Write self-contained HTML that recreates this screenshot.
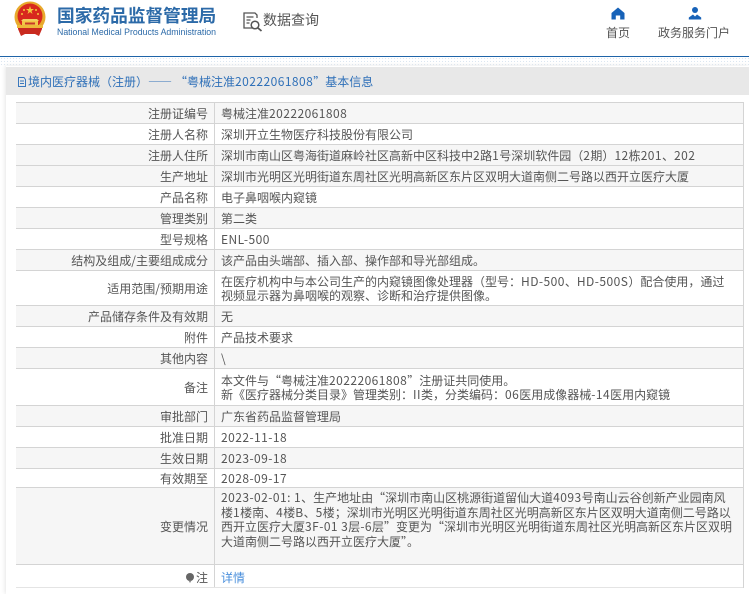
<!DOCTYPE html>
<html lang="zh"><head><meta charset="utf-8"><title>基本信息</title>
<style>
html,body{margin:0;padding:0;background:#fff}
body{width:749px;height:594px;overflow:hidden;position:relative;font-family:"Liberation Sans","Noto Sans CJK SC",sans-serif;font-size:12px;color:#555}
.a{position:absolute;white-space:nowrap}
.c{font-family:"Noto Sans CJK SC","Liberation Sans",sans-serif}
i{font-style:normal;letter-spacing:.45px}
.dots{position:absolute;left:0;top:57px;width:749px;height:9px;background-image:radial-gradient(#dbe6f0 .6px,transparent .8px);background-size:3px 3px}
.panel{position:absolute;left:6px;top:66px;width:743px;height:528px;background:#fff;box-shadow:-1px 0 4px #e6e6e6}
.head{position:absolute;left:6px;top:67px;width:743px;height:28px;background:#e8e8e8}
.row{position:absolute;left:16px;width:727px;border-top:1px solid #d4d4d4;box-sizing:border-box;background:#fff}
.g{background:#f6f6f6}
.l{position:absolute;left:0;width:192px;text-align:right;top:0;bottom:0;display:flex;align-items:center;justify-content:flex-end;color:#555;font-size:12px;white-space:nowrap}
.v{position:absolute;left:198px;top:0;bottom:0;width:525px;display:flex;align-items:center;color:#555;font-size:12px;line-height:14px;border-left:1px solid #d4d4d4;padding-left:6px;box-sizing:border-box;white-space:nowrap}
</style></head><body>
<svg class="a" style="left:13px;top:1px" width="34" height="36" viewBox="0 0 34 36">
<circle cx="17" cy="16" r="15.5" fill="#e8a92c"/>
<circle cx="17" cy="15" r="12.5" fill="#d8281e"/>
<polygon points="17,5 18,8 21,8 18.5,10 19.5,13 17,11 14.5,13 15.5,10 13,8 16,8" fill="#f4c93c"/>
<circle cx="11" cy="9" r="1" fill="#f4c93c"/><circle cx="23" cy="9" r="1" fill="#f4c93c"/><circle cx="9" cy="13" r="1" fill="#f4c93c"/><circle cx="25" cy="13" r="1" fill="#f4c93c"/>
<path d="M10 18h14l2 2H8z" fill="#f2d060"/><rect x="9" y="20" width="16" height="5" fill="#f2c848"/><rect x="12" y="21.5" width="10" height="2" fill="#c8392a"/>
<path d="M5 25h24v3l-3 7-4-2H12l-4 2-3-7z" fill="#c92a1f"/><rect x="4" y="24" width="26" height="3" fill="#eeb93a"/>
</svg>
<div class="a c" style="left:57px;top:3px;font-size:17.7px;line-height:24px;font-weight:700;color:#2c6aa8">国家药品监督管理局</div>
<div class="a" style="left:57px;top:26px;font-size:8.75px;line-height:12px;color:#2c6aa8">National Medical Products Administration</div>
<svg class="a" style="left:242px;top:11px" width="22" height="22" viewBox="0 0 22 22" fill="none" stroke="#555" stroke-width="1.3">
<path d="M11 17H2V2h11l2 2v3"/><path d="M4.500 6h7M4.500 9h4M4.500 12h3"/><circle cx="13" cy="14" r="3.800" stroke-width="1.500"/><path d="M16 17l3.500 3" stroke-width="1.800"/>
</svg>
<div class="a c" style="left:263px;top:10px;font-size:14px;line-height:20px;color:#555">数据查询</div>
<svg class="a" style="left:611px;top:7px" width="14" height="13" viewBox="0 0 14 13"><path d="M7 .5L13.500 6V12.500H9.200V8.500H4.800V12.500H.5V6z" fill="#1762b8"/></svg>
<div class="a c" style="left:606px;top:24px;font-size:12px;line-height:18px;color:#555">首页</div>
<svg class="a" style="left:688px;top:6px" width="14" height="14" viewBox="0 0 14 14"><circle cx="7" cy="4" r="3" fill="#1762b8"/><path d="M.8 13.500V11.500L5 8.500L7 10.500L9 8.500L13.200 11.500V13.500z" fill="#1762b8"/></svg>
<div class="a c" style="left:658px;top:24px;font-size:12px;line-height:18px;color:#555">政务服务门户</div>
<div class="a" style="left:0;top:56px;width:749px;height:1px;background:#1f64a8"></div>
<div class="dots"></div>
<div class="panel"></div>
<div class="head"></div>
<svg class="a" style="left:17px;top:76px" width="10" height="12" viewBox="0 0 10 12" fill="none" stroke="#3a78bd"><path d="M1.500 1.500H7l1.500 2v7h-7zM3 5h4M3 7.500h4"/></svg>
<div class="a c" style="left:28px;top:73px;font-size:12px;line-height:18px;color:#2f70b8">境内医疗器械（注册）<span style="letter-spacing:3px">——</span>“粤械注准<i>20222061808</i>”基本信息</div>

<div class="row g" style="top:102px;height:22px"><div class="l c">注册证编号</div><div class="v c"><span>粤械注准<i>20222061808</i></span></div></div>
<div class="row" style="top:123px;height:22px"><div class="l c">注册人名称</div><div class="v c">深圳开立生物医疗科技股份有限公司</div></div>
<div class="row g" style="top:144px;height:22px"><div class="l c">注册人住所</div><div class="v c"><span>深圳市南山区粤海街道麻岭社区高新中区科技中<i>2</i>路<i>1</i>号深圳软件园（<i>2</i>期）<i>12</i>栋<i>201</i>、<i>202</i></span></div></div>
<div class="row g" style="top:165px;height:22px"><div class="l c">生产地址</div><div class="v c">深圳市光明区光明街道东周社区光明高新区东片区双明大道南侧二号路以西开立医疗大厦</div></div>
<div class="row" style="top:186px;height:22px"><div class="l c">产品名称</div><div class="v c">电子鼻咽喉内窥镜</div></div>
<div class="row g" style="top:207px;height:22px"><div class="l c">管理类别</div><div class="v c">第二类</div></div>
<div class="row" style="top:228px;height:22px"><div class="l c">型号规格</div><div class="v c"><i>ENL-500</i></div></div>
<div class="row g" style="top:249px;height:22px"><div class="l c">结构及组成/主要组成成分</div><div class="v c">该产品由头端部、插入部、操作部和导光部组成。</div></div>
<div class="row" style="top:270px;height:36px"><div class="l c">适用范围/预期用途</div><div class="v c"><div>在医疗机构中与本公司生产的内窥镜图像处理器（型号：<i>HD-500</i>、<i>HD-500S</i>）配合使用，通过<br>视频显示器为鼻咽喉的观察、诊断和治疗提供图像。</div></div></div>
<div class="row g" style="top:305px;height:22px"><div class="l c">产品储存条件及有效期</div><div class="v c">无</div></div>
<div class="row" style="top:326px;height:22px"><div class="l c">附件</div><div class="v c">产品技术要求</div></div>
<div class="row g" style="top:347px;height:22px"><div class="l c">其他内容</div><div class="v c">\</div></div>
<div class="row" style="top:368px;height:38px"><div class="l c">备注</div><div class="v c"><div>本文件与“粤械注准<i>20222061808</i>”注册证共同使用。<br>新《医疗器械分类目录》管理类别：<i>II</i>类，分类编码：<i>06</i>医用成像器械<i>-14</i>医用内窥镜</div></div></div>
<div class="row g" style="top:405px;height:22px"><div class="l c">审批部门</div><div class="v c">广东省药品监督管理局</div></div>
<div class="row" style="top:426px;height:22px"><div class="l c">批准日期</div><div class="v c"><i>2022-11-18</i></div></div>
<div class="row g" style="top:447px;height:22px"><div class="l c">生效日期</div><div class="v c"><i>2023-09-18</i></div></div>
<div class="row" style="top:468px;height:20px"><div class="l c">有效期至</div><div class="v c"><i>2028-09-17</i></div></div>
<div class="row g" style="top:487px;height:78px"><div class="l c">变更情况</div><div class="v c" style="align-items:flex-start;line-height:14.6px"><div style="padding-top:3px"><i>2023-02-01: 1</i>、生产地址由“深圳市南山区桃源街道留仙大道<i>4093</i>号南山云谷创新产业园南风<br>楼<i>1</i>楼南、<i>4</i>楼<i>B</i>、<i>5</i>楼；深圳市光明区光明街道东周社区光明高新区东片区双明大道南侧二号路以<br>西开立医疗大厦<i>3F-01 3</i>层<i>-6</i>层”变更为“深圳市光明区光明街道东周社区光明高新区东片区双明<br>大道南侧二号路以西开立医疗大厦”。</div></div></div>
<div class="row" style="top:564px;height:24px;border-bottom:1px solid #e4e4e4"><div class="l c" style="padding-top:3px;box-sizing:border-box"><svg width="10" height="12" viewBox="0 0 10 12" style="margin-right:1px"><circle cx="5" cy="5" r="4" fill="#666"/><path d="M3.500 8.500h3L5 11z" fill="#888"/></svg>注</div><div class="v c" style="color:#4a8fdc;padding-top:3px">详情</div></div>
<div class="a" style="left:743px;top:102px;width:1px;height:486px;background:#d4d4d4"></div>
</body></html>
